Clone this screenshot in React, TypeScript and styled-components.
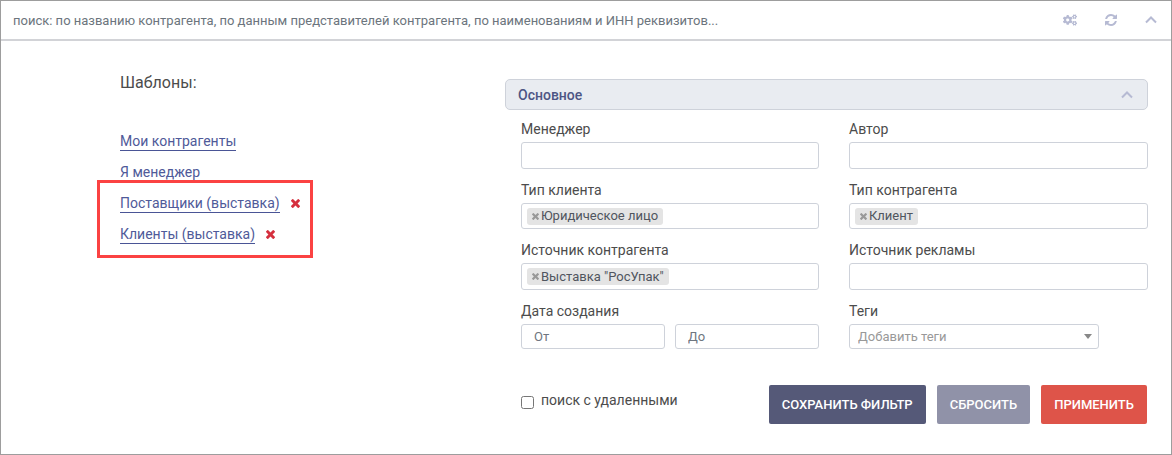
import React from "react";
import styled, { createGlobalStyle } from "styled-components";
import { FaCogs } from "react-icons/fa";

const GlobalStyle = createGlobalStyle`
  *, *::before, *::after { box-sizing: border-box; }
  body {
    margin: 0;
    background: #fff;
    color: #4c4c4c;
    font-family: Roboto, "Liberation Sans", sans-serif;
    font-size: 14px;
    line-height: 20px;
  }
  button, input, select { font-family: inherit; margin: 0; }
`;

const Page = styled.main`
  min-height: 100vh;
  border: 1px solid #9d9d9d;
`;

const SearchBar = styled.header`
  display: flex;
  align-items: center;
  height: 40px;
  padding: 0 14px 0 12px;
  border-bottom: 2px solid #d2d3d7;
`;

const SearchInput = styled.input`
  flex: 1;
  min-width: 0;
  height: 36px;
  padding: 0;
  border: 0;
  outline: 0;
  background: none;
  font-size: 13px;
  &::placeholder { color: #6c757d; opacity: 1; }
`;

const BarActions = styled.div`
  display: flex;
  align-items: center;
  gap: 28px;
`;

const IconButton = styled.button`
  display: flex;
  align-items: center;
  justify-content: center;
  height: 20px;
  padding: 0;
  border: 0;
  background: none;
  color: #b6bad3;
  cursor: pointer;
`;

const Content = styled.div`
  display: grid;
  grid-template-columns: 385px 1fr;
  padding: 29px 23px 29px 119px;
`;

const Templates = styled.nav`
  display: flex;
  flex-direction: column;
  align-items: flex-start;
`;

const TemplatesTitle = styled.h2`
  margin: 0 0 30px;
  font-size: 16px;
  font-weight: 400;
  line-height: 26px;
`;

const TemplateRow = styled.div`
  display: flex;
  align-items: center;
  gap: 11px;
  height: 31px;
`;

const TemplateLink = styled.a`
  border-bottom: 1px solid #4a5596;
  color: #4f5a99;
  line-height: 18px;
  text-decoration: none;
`;

const Highlighted = styled.div`
  position: relative;
  &::after {
    content: "";
    position: absolute;
    inset: -8px -13px -8px -23px;
    border: 3px solid #fb4242;
    pointer-events: none;
  }
`;

const RemoveTemplate = styled(IconButton)`
  color: #d5303e;
`;

const Filter = styled.form`
  padding-top: 9px;
`;

const SectionHeader = styled.div`
  display: flex;
  align-items: center;
  justify-content: space-between;
  height: 31px;
  padding: 0 14px 0 12px;
  border: 1px solid #ced2da;
  border-radius: 5px;
  background: #e9ecf1;
`;

const SectionTitle = styled.h3`
  margin: 0;
  color: #4d5584;
  font-size: 14px;
  font-weight: 500;
`;

const Fields = styled.div`
  display: grid;
  grid-template-columns: 298fr 299fr;
  gap: 11px 30px;
  padding: 9px 0 0 16px;
`;

const Field = styled.div`
  display: flex;
  flex-direction: column;
  gap: 3px;
  min-width: 0;
`;

const frame = `
  border: 1px solid #ced2da;
  border-radius: 3px;
  background: #fff;
`;

const TextInput = styled.input`
  ${frame}
  width: 100%;
  height: 27px;
  padding: 0 12px;
  font-size: 13px;
  &::placeholder { color: #6f7680; opacity: 1; }
`;

const DateInput = styled(TextInput)`
  flex: 1;
  min-width: 0;
  height: 25px;
`;

const DateRange = styled.div`
  display: flex;
  gap: 10px;
`;

const ChipBox = styled.div`
  ${frame}
  display: flex;
  align-items: center;
  flex: 1;
  min-height: 26px;
  padding: 0 5px;
`;

const Chip = styled.span`
  display: flex;
  align-items: center;
  gap: 2px;
  height: 17px;
  padding: 0 5px 0 4px;
  border-radius: 3px;
  background: #e4e4e4;
  color: #50555e;
  font-size: 13px;
  white-space: nowrap;
`;

const ChipInput = styled.input`
  flex: 1;
  min-width: 0;
  height: 20px;
  border: 0;
  outline: 0;
  background: none;
`;

const ChipRemove = styled(IconButton)`
  width: 8px;
  height: 16px;
  color: #999;
`;

const SelectWrap = styled.div`
  position: relative;
  width: 250px;
  max-width: 100%;
`;

const TagSelect = styled.select`
  ${frame}
  display: block;
  appearance: none;
  width: 100%;
  height: 25px;
  padding: 0 24px 0 8px;
  color: #999;
  font-size: 13px;
`;

const Caret = styled.svg`
  position: absolute;
  top: 10px;
  right: 7px;
  pointer-events: none;
`;

const Footer = styled.div`
  display: flex;
  align-items: flex-start;
  justify-content: space-between;
  padding: 36px 1px 0 16px;
`;

const DeletedOption = styled.label`
  display: flex;
  align-items: center;
  gap: 7px;
  padding-top: 5px;
`;

const Checkbox = styled.input`
  position: relative;
  top: 2px;
  width: 13px;
  height: 13px;
`;

const Actions = styled.div`
  display: flex;
  gap: 11px;
`;

const ActionButton = styled.button<{ $color: string }>`
  height: 39px;
  padding: 0 13px;
  border: 0;
  border-radius: 2px;
  background: ${(p) => p.$color};
  color: #fff;
  font-size: 13px;
  font-weight: 500;
  text-transform: uppercase;
  white-space: nowrap;
  cursor: pointer;
`;

const Cross = ({ size }: { size: number }) => (
  <svg width={size} height={size} viewBox="302 366 1188 1188" fill="currentColor" aria-hidden="true">
    <path d="M1490 1322q0 40-28 68l-136 136q-28 28-68 28t-68-28l-294-294-294 294q-28 28-68 28t-68-28l-136-136q-28-28-28-68t28-68l294-294-294-294q-28-28-28-68t28-68l136-136q28-28 68-28t68 28l294 294 294-294q28-28 68-28t68 28l136 136q28 28 28 68t-28 68l-294 294 294 294q28 28 28 68z" />
  </svg>
);

const Refresh = () => (
  <svg width="12" height="12" viewBox="0 128 1536 1536" fill="currentColor" aria-hidden="true">
    <path d="M1511 1056q0 5-1 7-64 268-268 434.500t-478 166.500q-146 0-282.500-55t-243.500-157l-129 129q-19 19-45 19t-45-19-19-45v-448q0-26 19-45t45-19h448q26 0 45 19t19 45-19 45l-137 137q71 66 161 102t187 36q134 0 250-65t186-179q11-17 53-117 8-23 30-23h192q13 0 22.500 9.500t9.500 22.500zm25-800v448q0 26-19 45t-45 19h-448q-26 0-45-19t-19-45 19-45l138-138q-148-137-349-137-134 0-250 65t-186 179q-11 17-53 117-8 23-30 23h-199q-13 0-22.500-9.500t-9.500-22.500v-7q65-268 270-434.500t480-166.500q146 0 284 55.500t245 156.500l130-129q19-19 45-19t45 19 19 45z" />
  </svg>
);

const ChevronUp = () => (
  <svg width="12" height="8" viewBox="0 0 12 8" fill="none" stroke="currentColor" strokeWidth="2" aria-hidden="true">
    <path d="M1 6.500 6 1.500 11 6.500" />
  </svg>
);

const PlainField = ({ id, label }: { id: string; label: string }) => (
  <Field>
    <label htmlFor={id}>{label}</label>
    <TextInput id={id} type="text" />
  </Field>
);

const ChipField = ({ id, label, value }: { id: string; label: string; value: string }) => (
  <Field>
    <label htmlFor={id}>{label}</label>
    <ChipBox>
      <Chip>
        <ChipRemove type="button" aria-label={`Убрать ${value}`}>
          <Cross size={7} />
        </ChipRemove>
        {value}
      </Chip>
      <ChipInput id={id} type="text" />
    </ChipBox>
  </Field>
);

const savedTemplates = ["Поставщики (выставка)", "Клиенты (выставка)"];

export default function App() {
  return (
    <>
      <GlobalStyle />
      <Page>
        <SearchBar>
          <SearchInput
            type="text"
            aria-label="Поиск"
            placeholder="поиск: по названию контрагента, по данным представителей контрагента, по наименованиям и ИНН реквизитов..."
          />
          <BarActions>
            <IconButton type="button" aria-label="Настройки">
              <FaCogs size={14} />
            </IconButton>
            <IconButton type="button" aria-label="Обновить">
              <Refresh />
            </IconButton>
            <IconButton type="button" aria-label="Свернуть поиск">
              <ChevronUp />
            </IconButton>
          </BarActions>
        </SearchBar>
        <Content>
          <Templates>
            <TemplatesTitle>Шаблоны:</TemplatesTitle>
            <TemplateRow>
              <TemplateLink href="#mine">Мои контрагенты</TemplateLink>
            </TemplateRow>
            <TemplateRow>
              <TemplateLink href="#manager">Я менеджер</TemplateLink>
            </TemplateRow>
            <Highlighted>
              {savedTemplates.map((name) => (
                <TemplateRow key={name}>
                  <TemplateLink href="#saved">{name}</TemplateLink>
                  <RemoveTemplate type="button" aria-label={`Удалить ${name}`}>
                    <Cross size={9} />
                  </RemoveTemplate>
                </TemplateRow>
              ))}
            </Highlighted>
          </Templates>
          <Filter>
            <SectionHeader>
              <SectionTitle>Основное</SectionTitle>
              <IconButton type="button" aria-label="Свернуть раздел">
                <ChevronUp />
              </IconButton>
            </SectionHeader>
            <Fields>
              <PlainField id="manager-field" label="Менеджер" />
              <PlainField id="author" label="Автор" />
              <ChipField id="client-type" label="Тип клиента" value="Юридическое лицо" />
              <ChipField id="partner-type" label="Тип контрагента" value="Клиент" />
              <ChipField id="source" label="Источник контрагента" value={'Выставка "РосУпак"'} />
              <PlainField id="ad-source" label="Источник рекламы" />
              <Field>
                <label htmlFor="date-from">Дата создания</label>
                <DateRange>
                  <DateInput id="date-from" type="text" placeholder="От" />
                  <DateInput type="text" placeholder="До" aria-label="Дата создания до" />
                </DateRange>
              </Field>
              <Field>
                <label htmlFor="tags">Теги</label>
                <SelectWrap>
                  <TagSelect id="tags">
                    <option>Добавить теги</option>
                  </TagSelect>
                  <Caret width="8" height="5" viewBox="0 0 8 5" fill="#888" aria-hidden="true">
                    <path d="M0 0h8L4 5z" />
                  </Caret>
                </SelectWrap>
              </Field>
            </Fields>
            <Footer>
              <DeletedOption>
                <Checkbox type="checkbox" />
                поиск с удаленными
              </DeletedOption>
              <Actions>
                <ActionButton type="button" $color="#555978">Сохранить фильтр</ActionButton>
                <ActionButton type="reset" $color="#9092a8">Сбросить</ActionButton>
                <ActionButton type="button" $color="#de5449">Применить</ActionButton>
              </Actions>
            </Footer>
          </Filter>
        </Content>
      </Page>
    </>
  );
}
